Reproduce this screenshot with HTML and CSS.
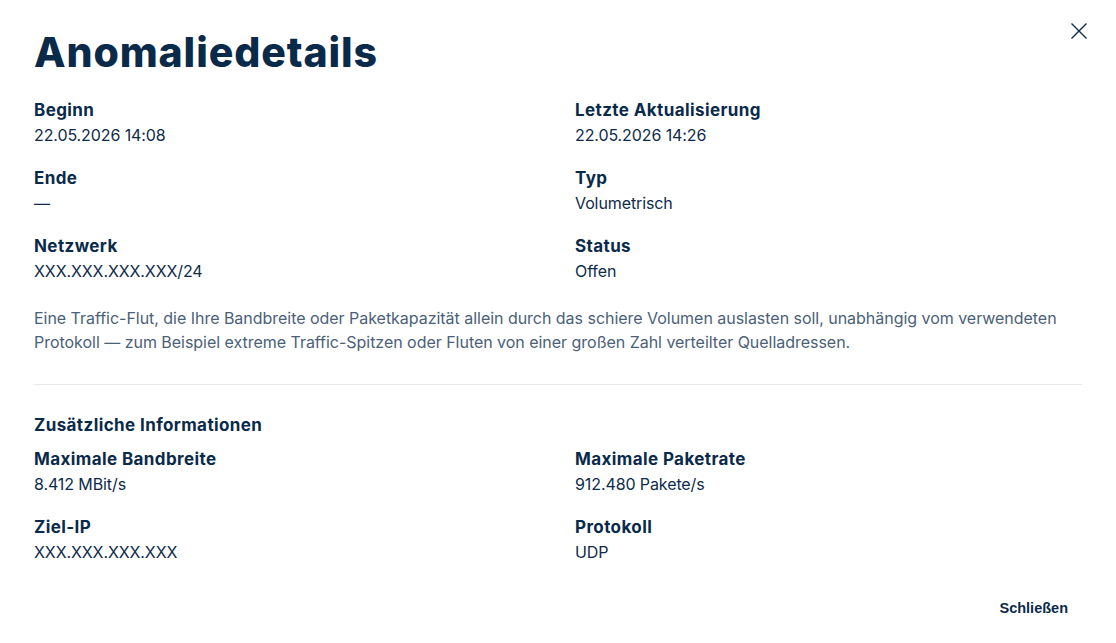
FILE: index.html
```html
<!DOCTYPE html>
<html lang="de">
<head>
<meta charset="utf-8">
<title>Anomaliedetails</title>
<link rel="stylesheet" href="styles.css">
</head>
<body>
<div class="dialog">
  <button class="close" aria-label="Schließen">
    <svg width="18" height="18" viewBox="0 0 18 18"><path d="M1.5 1.5 L16.5 16.5 M16.5 1.5 L1.5 16.5" stroke="#0d2b4a" stroke-width="1.4" fill="none"/></svg>
  </button>
  <h1 class="title">Anomaliedetails</h1>
  <div class="grid">
    <div class="field"><div class="label">Beginn</div><div class="value">22.05.2026 14:08</div></div>
    <div class="field"><div class="label">Letzte Aktualisierung</div><div class="value">22.05.2026 14:26</div></div>
    <div class="field"><div class="label">Ende</div><div class="value">—</div></div>
    <div class="field"><div class="label">Typ</div><div class="value">Volumetrisch</div></div>
    <div class="field"><div class="label">Netzwerk</div><div class="value">XXX.XXX.XXX.XXX/24</div></div>
    <div class="field"><div class="label">Status</div><div class="value">Offen</div></div>
  </div>
  <p class="desc">Eine Traffic-Flut, die Ihre Bandbreite oder Paketkapazität allein durch das schiere Volumen auslasten soll, unabhängig vom verwendeten Protokoll — zum Beispiel extreme Traffic-Spitzen oder Fluten von einer großen Zahl verteilter Quelladressen.</p>
  <hr class="divider">
  <h2 class="section">Zusätzliche Informationen</h2>
  <div class="grid">
    <div class="field"><div class="label">Maximale Bandbreite</div><div class="value">8.412 MBit/s</div></div>
    <div class="field"><div class="label">Maximale Paketrate</div><div class="value">912.480 Pakete/s</div></div>
    <div class="field"><div class="label">Ziel-IP</div><div class="value">XXX.XXX.XXX.XXX</div></div>
    <div class="field"><div class="label">Protokoll</div><div class="value">UDP</div></div>
  </div>
  <div class="footer">
    <button class="btn">Schließen</button>
  </div>
</div>
</body>
</html>
```
FILE: styles.css
```css
* { box-sizing: border-box; }
html, body { margin: 0; padding: 0; background: #fff; }
body {
  font-family: Inter, "Noto Sans", sans-serif;
  color: #0d2b4a;
}
.dialog {
  position: relative;
  width: 1116px;
  height: 643px;
  padding: 28px 34px 0 34px;
}
.close {
  position: absolute;
  top: 22px;
  right: 28px;
  width: 18px;
  height: 18px;
  padding: 0;
  border: 0;
  background: none;
  cursor: pointer;
}
.close svg { display: block; }
.title {
  margin: 0 0 21.5px 0;
  font-family: Inter, sans-serif;
  font-weight: 800;
  font-size: 41px;
  line-height: 48px;
  letter-spacing: 0.9px;
  color: #0a2a4a;
}
.grid {
  display: grid;
  grid-template-columns: 1fr 1fr;
  column-gap: 34px;
  row-gap: 18px;
}
.label {
  font-size: 17px;
  font-weight: 700;
  line-height: 25px;
  letter-spacing: 0.4px;
  color: #0a2a4a;
}
.value {
  font-size: 16px;
  line-height: 25px;
  letter-spacing: -0.1px;
  color: #0d2b4a;
}
.desc {
  margin: 22.5px 0 0 0;
  font-size: 16px;
  line-height: 24px;
  letter-spacing: -0.03px;
  color: #4a6178;
}
.divider {
  margin: 30px 0 0 0;
  border: 0;
  border-top: 1px solid #e6e8ec;
  height: 0;
}
.section {
  margin: 28px 0 9px 0;
  font-size: 17px;
  font-weight: 700;
  line-height: 25px;
  letter-spacing: 0.4px;
  color: #0a2a4a;
}
.footer {
  display: flex;
  justify-content: flex-end;
  margin-top: 26px;
}
.btn {
  border: 0;
  background: none;
  padding: 8px 14px;
  font-family: "Liberation Sans", Arial, sans-serif;
  font-weight: 700;
  font-size: 14.5px;
  line-height: 18px;
  color: #0a2a4a;
  cursor: pointer;
}
```
